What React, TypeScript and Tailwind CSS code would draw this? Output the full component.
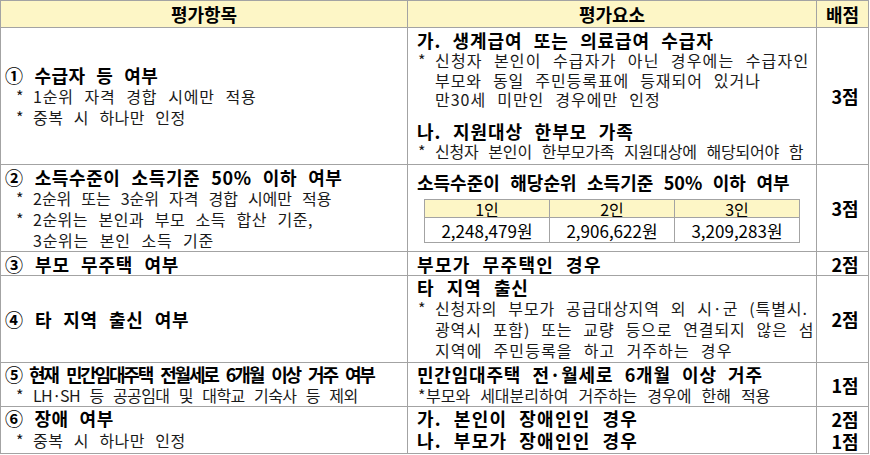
import React from "react";

const B = "border-r border-b border-[#a3a3a3]";
const T = "text-[18px] font-bold leading-[22px] whitespace-nowrap";
const N = "text-[16px] whitespace-nowrap text-[#1a1a1a]";

type Line = [string, string];

function LNote({ lines, lh = "leading-[21px]" }: { lines: Line[]; lh?: string }) {
  return (
    <div className={`flex pl-[11px] ${N} ${lh}`}>
      <span className="w-[17px] shrink-0">*</span>
      <div>
        {lines.map(([l, c], i) => (
          <div key={i} className={c}>
            {l}
          </div>
        ))}
      </div>
    </div>
  );
}

function RNote({ lines, lh = "leading-[19.5px]", sw = "w-[17px]" }: { lines: Line[]; lh?: string; sw?: string }) {
  return (
    <div className={`flex pl-[1px] ${N} ${lh}`}>
      <span className={`${sw} shrink-0`}>*</span>
      <div>
        {lines.map(([l, c], i) => (
          <div key={i} className={c}>
            {l}
          </div>
        ))}
      </div>
    </div>
  );
}

function Score({ children }: { children: React.ReactNode }) {
  return (
    <div className={`${B} flex flex-col items-center justify-center pl-[5px] ${T}`}>{children}</div>
  );
}

export default function App() {
  return (
    <div className="w-[870px] h-[455px] bg-white text-black font-['Noto_Sans_CJK_KR','Noto_Sans',sans-serif] [word-spacing:0.4em]">
      <div className="grid w-[869px] grid-cols-[407px_409px_52px] grid-rows-[27px_137px_87px_24px_87px_44px_47px] border-l border-t border-[#a3a3a3]">
        {/* header */}
        <div className={`${B} flex items-center justify-center bg-[#fdf6c6] ${T}`}>평가항목</div>
        <div className={`${B} flex items-center justify-center bg-[#fdf6c6] ${T}`}>평가요소</div>
        <div className={`${B} flex items-center justify-center bg-[#fdf6c6] ${T}`}>배점</div>

        {/* row 1 */}
        <div className={`${B} flex flex-col justify-center pl-[4px]`}>
          <div className={`${T} tracking-[0.45px]`}>① 수급자 등 여부</div>
          <LNote lines={[["1순위 자격 경합 시에만 적용", "tracking-[0.8px]"]]} />
          <LNote lines={[["중복 시 하나만 인정", "tracking-[0.45px]"]]} />
        </div>
        <div className={`${B} flex flex-col pt-[1px] pl-[9px]`}>
          <div className={`${T} tracking-[0.9px]`}>가. 생계급여 또는 의료급여 수급자</div>
          <RNote
            lines={[
              ["신청자 본인이 수급자가 아닌 경우에는 수급자인", "tracking-[1.2px]"],
              ["부모와 동일 주민등록표에 등재되어 있거나", "tracking-[0.95px]"],
              ["만30세 미만인 경우에만 인정", "tracking-[1px]"],
            ]}
          />
          <div className={`${T} mt-[10px] tracking-[1px]`}>나. 지원대상 한부모 가족</div>
          <RNote lines={[["신청자 본인이 한부모가족 지원대상에 해당되어야 함", "tracking-[-0.2px]"]]} lh="leading-[18px]" />
        </div>
        <Score>3점</Score>

        {/* row 2 */}
        <div className={`${B} flex flex-col justify-center pl-[4px]`}>
          <div className={`${T} tracking-[0.6px]`}>② 소득수준이 소득기준 50% 이하 여부</div>
          <LNote lines={[["2순위 또는 3순위 자격 경합 시에만 적용", ""]]} />
          <LNote
            lines={[
              ["2순위는 본인과 부모 소득 합산 기준,", "tracking-[0.5px]"],
              ["3순위는 본인 소득 기준", "tracking-[0.75px]"],
            ]}
          />
        </div>
        <div className={`${B} flex flex-col pt-[5px] pl-[9px]`}>
          <div className={`${T} leading-[24px]`}>소득수준이 해당순위 소득기준 50% 이하 여부</div>
          <div className="mt-[5px] ml-[7px] grid w-[376px] grid-cols-3 grid-rows-[18px_25px] border-l border-t border-[#a3a3a3] text-[16px] leading-none [word-spacing:normal]">
            <div className="flex items-center justify-center border-r border-b border-[#a3a3a3] bg-[#fdf6c6]">1인</div>
            <div className="flex items-center justify-center border-r border-b border-[#a3a3a3] bg-[#fdf6c6]">2인</div>
            <div className="flex items-center justify-center border-r border-b border-[#a3a3a3] bg-[#fdf6c6]">3인</div>
            <div className="flex items-center justify-center border-r border-b border-[#a3a3a3] text-[17px]">2,248,479원</div>
            <div className="flex items-center justify-center border-r border-b border-[#a3a3a3] text-[17px]">2,906,622원</div>
            <div className="flex items-center justify-center border-r border-b border-[#a3a3a3] text-[17px]">3,209,283원</div>
          </div>
        </div>
        <Score>3점</Score>

        {/* row 3 */}
        <div className={`${B} flex items-center pl-[4px]`}>
          <div className={`${T} tracking-[0.8px]`}>③ 부모 무주택 여부</div>
        </div>
        <div className={`${B} flex items-center pl-[9px]`}>
          <div className={`${T} tracking-[1.35px]`}>부모가 무주택인 경우</div>
        </div>
        <Score>2점</Score>

        {/* row 4 */}
        <div className={`${B} flex items-center pl-[4px]`}>
          <div className={`${T} tracking-[0.7px]`}>④ 타 지역 출신 여부</div>
        </div>
        <div className={`${B} flex flex-col pl-[9px]`}>
          <div className={`${T} tracking-[0.8px] [word-spacing:0.42em]`}>타 지역 출신</div>
          <RNote
            lh="leading-[21px]"
            lines={[
              ["신청자의 부모가 공급대상지역 외 시·군 (특별시.", "tracking-[0.9px]"],
              ["광역시 포함) 또는 교량 등으로 연결되지 않은 섬", "tracking-[0.9px]"],
              ["지역에 주민등록을 하고 거주하는 경우", "tracking-[1.1px]"],
            ]}
          />
        </div>
        <Score>2점</Score>

        {/* row 5 */}
        <div className={`${B} flex flex-col pl-[4px]`}>
          <div className={`${T} tracking-[-2.2px] [word-spacing:0.35em]`}>⑤ 현재 민간임대주택 전월세로 6개월 이상 거주 여부</div>
          <LNote lines={[["LH·SH 등 공공임대 및 대학교 기숙사 등 제외", "tracking-[-0.6px]"]]} />
        </div>
        <div className={`${B} flex flex-col pl-[9px]`}>
          <div className={`${T} tracking-[0.8px]`}>민간임대주택 전·월세로 6개월 이상 거주</div>
          <RNote lh="leading-[21px]" sw="w-[8px]" lines={[["부모와 세대분리하여 거주하는 경우에 한해 적용", ""]]} />
        </div>
        <Score>1점</Score>

        {/* row 6 */}
        <div className={`${B} flex flex-col pl-[4px]`}>
          <div className={`${T} tracking-[0.5px]`}>⑥ 장애 여부</div>
          <LNote lh="leading-[22px]" lines={[["중복 시 하나만 인정", "tracking-[0.45px]"]]} />
        </div>
        <div className={`${B} flex flex-col pl-[9px]`}>
          <div className={`${T} tracking-[1.3px]`}>가. 본인이 장애인인 경우</div>
          <div className={`${T} tracking-[1.3px]`}>나. 부모가 장애인인 경우</div>
        </div>
        <div className={`${B} flex flex-col items-center justify-center pl-[5px] ${T}`}>
          <div>2점</div>
          <div>1점</div>
        </div>
      </div>
    </div>
  );
}
